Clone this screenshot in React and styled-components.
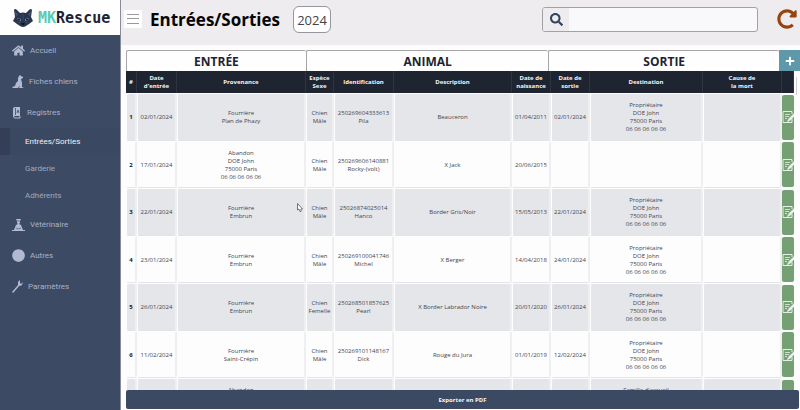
import React from "react";
import styled, { createGlobalStyle } from "styled-components";
import { FaHome, FaSearch, FaPlus, FaRedoAlt, FaCircle } from "react-icons/fa";

const GlobalStyle = createGlobalStyle`
  *, *::before, *::after { box-sizing: border-box; }
  body {
    margin: 0;
    background: #fdfdfe;
    color: #1d2430;
    font-family: "Open Sans", "Noto Sans", sans-serif;
  }
  button, input { font: inherit; color: inherit; margin: 0; }
`;

const Page = styled.div`
  display: flex;
  height: 100vh;
  overflow: hidden;
`;

const Sidebar = styled.aside`
  flex: 0 0 121px;
  display: flex;
  flex-direction: column;
  background: #3d4a63;
  border-right: 1px solid #878b9b;
`;

const Brand = styled.div`
  display: flex;
  align-items: center;
  gap: 5px;
  height: 35px;
  padding-left: 13px;
  background: #fefefe;
  font: bold 15px "DejaVu Sans Mono", monospace;
  color: #1c2438;
`;

const BrandAccent = styled.span`
  color: #58ccb4;
`;

const NavLink = styled.a`
  display: flex;
  align-items: center;
  gap: ${(p) => p.$gap || 5}px;
  height: 31px;
  padding-left: 12px;
  color: #a9b2c8;
  font-family: Roboto, sans-serif;
  font-size: 8px;
  text-decoration: none;
  svg { flex: none; color: #b1bad2; }
`;

const SubLink = styled.a`
  display: flex;
  align-items: center;
  height: 27px;
  padding-left: ${(p) => (p.$active ? 15 : 25)}px;
  border-left: ${(p) => (p.$active ? "10px solid #343e56" : "0")};
  background: ${(p) => (p.$active ? "#3b4861" : "transparent")};
  color: ${(p) => (p.$active ? "#f1f2f6" : "#a0a9bf")};
  font-family: Roboto, sans-serif;
  font-size: 8px;
  text-decoration: none;
`;

const Main = styled.main`
  flex: 1;
  min-width: 0;
  display: flex;
  flex-direction: column;
`;

const TopBar = styled.header`
  display: flex;
  align-items: flex-start;
  height: 45px;
  padding: 6px 3px 0 3px;
  background: #eeecee;
`;

const MenuButton = styled.button`
  display: grid;
  place-items: center;
  width: 18px;
  height: 18px;
  margin-top: 4px;
  padding: 0;
  border: 0;
  background: #fefefe;
  color: #999;
`;

const Title = styled.h1`
  margin: 0 13px 0 8px;
  color: #050505;
  font-size: 17px;
  line-height: 28px;
  font-weight: 700;
`;

const YearInput = styled.input`
  width: 38px;
  height: 27px;
  padding: 0;
  border: 1px solid #96969c;
  border-radius: 6px;
  background: #fefefe;
  color: #444;
  font-size: 13px;
  text-align: center;
`;

const SearchBox = styled.label`
  display: flex;
  width: 216px;
  height: 25px;
  margin: 1px 19px 0 auto;
  border: 1px solid #a2a2a6;
  border-radius: 3px;
  overflow: hidden;
  background: #f9f8fa;
`;

const SearchIcon = styled.span`
  display: grid;
  place-items: center;
  width: 26px;
  background: #eeecee;
  color: #34435f;
`;

const SearchInput = styled.input`
  flex: 1;
  min-width: 0;
  border: 0;
  background: transparent;
  font-size: 12px;
  outline: none;
`;

const ReloadButton = styled.button`
  display: flex;
  margin-top: 3px;
  padding: 0;
  border: 0;
  background: none;
  color: #96440b;
`;

const Content = styled.section`
  flex: 1;
  min-height: 0;
  display: flex;
  flex-direction: column;
  padding: 5px 0 1px 5px;
`;

const Groups = styled.div`
  display: flex;
  height: 21px;
`;

const Group = styled.h2`
  flex: ${(p) => p.$span} 1 0;
  margin: 0;
  border: 1px solid #a7a5a8;
  border-width: 1px 0 0 1px;
  border-radius: 2px 2px 0 0;
  background: #fefefe;
  font-size: 12px;
  line-height: 22px;
  font-weight: 700;
  text-align: center;
`;

const AddButton = styled.button`
  display: grid;
  place-items: center;
  width: 21px;
  padding: 0;
  border: 0;
  background: #5f98a8;
  color: #fff;
`;

const Scroller = styled.div`
  flex: 1;
  min-height: 0;
  overflow: hidden;
  display: flex;
  align-items: flex-start;
`;

const TableArea = styled.div`
  flex: 1;
  min-width: 0;
`;

const Table = styled.table`
  width: 100%;
  table-layout: fixed;
  border-collapse: separate;
  border-spacing: 0;
  font-size: 6px;
  line-height: 8px;
  text-align: center;
`;

const Col = styled.col`
  width: ${(p) => p.$w}px;
`;

const Head = styled.th`
  height: 22px;
  padding: 0;
  border-right: 1px solid #2d3542;
  background: #1e2530;
  color: #f4f4f6;
  font-weight: 700;
  white-space: pre-line;
`;

const Row = styled.tr`
  height: 47px;
  --cell: #fdfdfe;
  &:nth-child(odd) {
    height: 48px;
    --cell: #e5e6ea;
  }
`;

const Cell = styled.td`
  padding: 0;
  border: 1px solid #fdfdfe;
  border-right: 2px solid #efeff2;
  border-bottom-color: #e3e4e8;
  border-radius: 2px;
  background: var(--cell);
  background-clip: padding-box;
  color: #43454c;
  white-space: pre;
`;

const NumberCell = styled(Cell).attrs({ as: "th", scope: "row" })`
  color: #15181e;
  font-weight: 700;
`;

const EditCell = styled.td`
  padding: 1px 0;
`;

const EditButton = styled.button`
  display: flex;
  align-items: center;
  width: 100%;
  height: 45px;
  padding: 0;
  border: 0;
  border-radius: 2px;
  background: #74a074;
  color: #e6f0e4;
  overflow: hidden;
  svg { flex: none; }
`;

const Track = styled.div`
  flex: 0 0 6px;
  padding: 6px 3px 0 2px;
`;

const Thumb = styled.div`
  height: 18px;
  background: #d0d0d4;
`;

const ExportButton = styled.button`
  height: 19px;
  margin-right: 1px;
  padding: 0;
  border: 0;
  border-radius: 2px;
  background: #3c4962;
  color: #f5f6f8;
  font-size: 6px;
  font-weight: 700;
`;

const Pointer = styled.svg`
  position: fixed;
  left: 297px;
  top: 203px;
  pointer-events: none;
`;

function FoxLogo() {
  return (
    <svg width="20" height="20" viewBox="0 0 20 20" aria-hidden="true">
      <path d="M1 2Q2 0 4 2L7 5Q10 4 13 5L16 2Q18 0 19 2L18 9L20 13L16 16L13 18Q10 20 7 18L4 16L0 13L2 9Z" fill="#2a3650" />
      <path d="M2 3L5 6L3 9ZM18 3L15 6L17 9Z" fill="#43506c" />
      <path d="M4 10L8 11L8 13L5 12ZM16 10L12 11L12 13L15 12Z" fill="#6d7f9b" />
      <path d="M5 11H7V12H5ZM13 11H15V12H13Z" fill="#141c2c" />
      <path d="M10 6V12M5 15L8 14M15 15L12 14" stroke="#3b4963" fill="none" />
      <path d="M8 15H12L11 17H9Z" fill="#0d1422" />
    </svg>
  );
}

function DogIcon() {
  return (
    <svg width="13" height="14" viewBox="0 0 13 14" fill="currentColor" aria-hidden="true">
      <path d="M6 3L7 1L8 0L9 1L11 2V3L9 4L10 8V12L12 13H7L8 10L6 13H1L0 12L3 11Q3 8 6 6Z" />
    </svg>
  );
}

function RegisterIcon() {
  return (
    <svg width="10" height="13" viewBox="0 0 10 13" aria-hidden="true">
      <path d="M1 3Q1 1 3 1H8V10H3L1 11Z" fill="currentColor" />
      <path d="M1.500 3V10.500Q1.500 12 3 12H8V10" fill="none" stroke="currentColor" />
      <path d="M3.500 2V9M5 7L6 4L7 7" fill="none" stroke="#3d4a63" strokeWidth=".8" />
    </svg>
  );
}

function VetIcon() {
  return (
    <svg width="13" height="14" viewBox="0 0 13 14" fill="currentColor" aria-hidden="true">
      <path d="M4 1H9L8 3V5L7 6L9 7L11 12H13V13H0V12H2L4 7L6 6L5 5V3Z" />
      <path d="M5 3H8M4 10L6 11L9 10" fill="none" stroke="#3d4a63" strokeWidth=".6" />
    </svg>
  );
}

function WrenchIcon() {
  return (
    <svg width="11" height="13" viewBox="0 0 11 13" aria-hidden="true">
      <path d="M1 12L7 5" stroke="currentColor" strokeWidth="1.500" strokeLinecap="round" />
      <path d="M8 0L8 3L9 4L11 2L10 5L8 6L6 5V2Z" fill="currentColor" />
    </svg>
  );
}

function MenuIcon() {
  return (
    <svg width="12" height="12" viewBox="0 0 12 12" stroke="currentColor" aria-hidden="true">
      <path d="M0 1.5H12M0 5.5H12M0 10.5H12" />
    </svg>
  );
}

function EditIcon() {
  return (
    <svg width="13" height="14" viewBox="0 0 13 14" fill="none" stroke="currentColor" aria-hidden="true">
      <path d="M10 4V1.5H1V12.5H10V9" />
      <path d="M3 4.5H8M3 6.5H7M3 8.5H5" strokeWidth=".8" />
      <path d="M7 10L13 4" strokeWidth="2.500" />
      <path d="M5 12L8 11L6 9Z" fill="currentColor" stroke="none" />
    </svg>
  );
}

const columns = [
  ["#", 11],
  ["Date\nd'entrée", 40],
  ["Provenance", 129],
  ["Espèce\nSexe", 28],
  ["Identification", 60],
  ["Description", 118],
  ["Date de\nnaissance", 39],
  ["Date de\nsortie", 39],
  ["Destination", 113],
  ["Cause de\nla mort", 79],
  ["", 12],
];

const OWNER = "Propriétaire\nDOE John\n75000 Paris\n06 06 06 06 06";

const records = [
  ["02/01/2024", "Fourrière\nPlan de Phazy", "Chien\nMâle", "250269604333613\nPila", "Beauceron", "01/04/2011", "02/01/2024", OWNER, ""],
  ["17/01/2024", "Abandon\nDOE John\n75000 Paris\n06 06 06 06 06", "Chien\nMâle", "250269606140881\nRocky-(volt)", "X Jack", "20/06/2015", "", "", ""],
  ["22/01/2024", "Fourrière\nEmbrun", "Chien\nMâle", "25026874025014\nHanco", "Border Gris/Noir", "15/05/2013", "22/01/2024", OWNER, ""],
  ["23/01/2024", "Fourrière\nEmbrun", "Chien\nMâle", "250269100041746\nMichel", "X Berger", "14/04/2018", "24/01/2024", OWNER, ""],
  ["26/01/2024", "Fourrière\nEmbrun", "Chien\nFemelle", "250268501857625\nPearl", "X Border Labrador Noire", "20/01/2020", "26/01/2024", OWNER, ""],
  ["11/02/2024", "Fourrière\nSaint-Crépin", "Chien\nMâle", "250269101148167\nDick", "Rouge du Jura", "01/01/2019", "12/02/2024", OWNER, ""],
  ["", "Abandon\nDOE John\n75000 Paris\n06 06 06 06 06", "", "", "", "", "", "Famille d'accueil\nDOE John\n75000 Paris\n06 06 06 06 06", ""],
];

export default function App() {
  return (
    <Page>
      <GlobalStyle />
      <Sidebar>
        <Brand>
          <FoxLogo />
          <span><BrandAccent>MK</BrandAccent>Rescue</span>
        </Brand>
        <nav>
          <NavLink href="#accueil"><FaHome size={13} />Accueil</NavLink>
          <NavLink href="#chiens" $gap={4}><DogIcon />Fiches chiens</NavLink>
          <NavLink href="#registres"><RegisterIcon />Registres</NavLink>
          <SubLink href="#entrees" $active aria-current="page">Entrées/Sorties</SubLink>
          <SubLink href="#garderie">Garderie</SubLink>
          <SubLink href="#adherents">Adhérents</SubLink>
          <NavLink href="#veterinaire"><VetIcon />Vétérinaire</NavLink>
          <NavLink href="#autres"><FaCircle size={13} />Autres</NavLink>
          <NavLink href="#parametres"><WrenchIcon />Paramètres</NavLink>
        </nav>
      </Sidebar>
      <Main>
        <TopBar>
          <MenuButton aria-label="Menu"><MenuIcon /></MenuButton>
          <Title>Entrées/Sorties</Title>
          <YearInput aria-label="Année" defaultValue="2024" />
          <SearchBox>
            <SearchIcon><FaSearch size={13} /></SearchIcon>
            <SearchInput type="search" aria-label="Rechercher" />
          </SearchBox>
          <ReloadButton aria-label="Actualiser"><FaRedoAlt size={20} /></ReloadButton>
        </TopBar>
        <Content>
          <Groups>
            <Group $span={180}>ENTRÉE</Group>
            <Group $span={243}>ANIMAL</Group>
            <Group $span={231}>SORTIE</Group>
            <AddButton aria-label="Ajouter"><FaPlus size={10} /></AddButton>
          </Groups>
          <Scroller>
            <TableArea>
              <Table>
                <colgroup>
                  {columns.map(([name, w]) => <Col key={name} $w={w} />)}
                </colgroup>
                <thead>
                  <tr>{columns.map(([name]) => <Head key={name} scope="col">{name}</Head>)}</tr>
                </thead>
                <tbody>
                  {records.map((record, i) => (
                    <Row key={i}>
                      <NumberCell>{i < 6 ? i + 1 : ""}</NumberCell>
                      {record.map((value, j) => <Cell key={j}>{value}</Cell>)}
                      <EditCell>
                        <EditButton aria-label={`Modifier la ligne ${i + 1}`}><EditIcon /></EditButton>
                      </EditCell>
                    </Row>
                  ))}
                </tbody>
              </Table>
            </TableArea>
            <Track><Thumb /></Track>
          </Scroller>
          <ExportButton>Exporter en PDF</ExportButton>
        </Content>
      </Main>
      <Pointer width="6" height="9" viewBox="0 0 6 9" aria-hidden="true">
        <path d="M.5 .5V7L2 6L3 8.500H4V6H5.500Z" fill="#fff" stroke="#555" strokeWidth=".8" />
      </Pointer>
    </Page>
  );
}
